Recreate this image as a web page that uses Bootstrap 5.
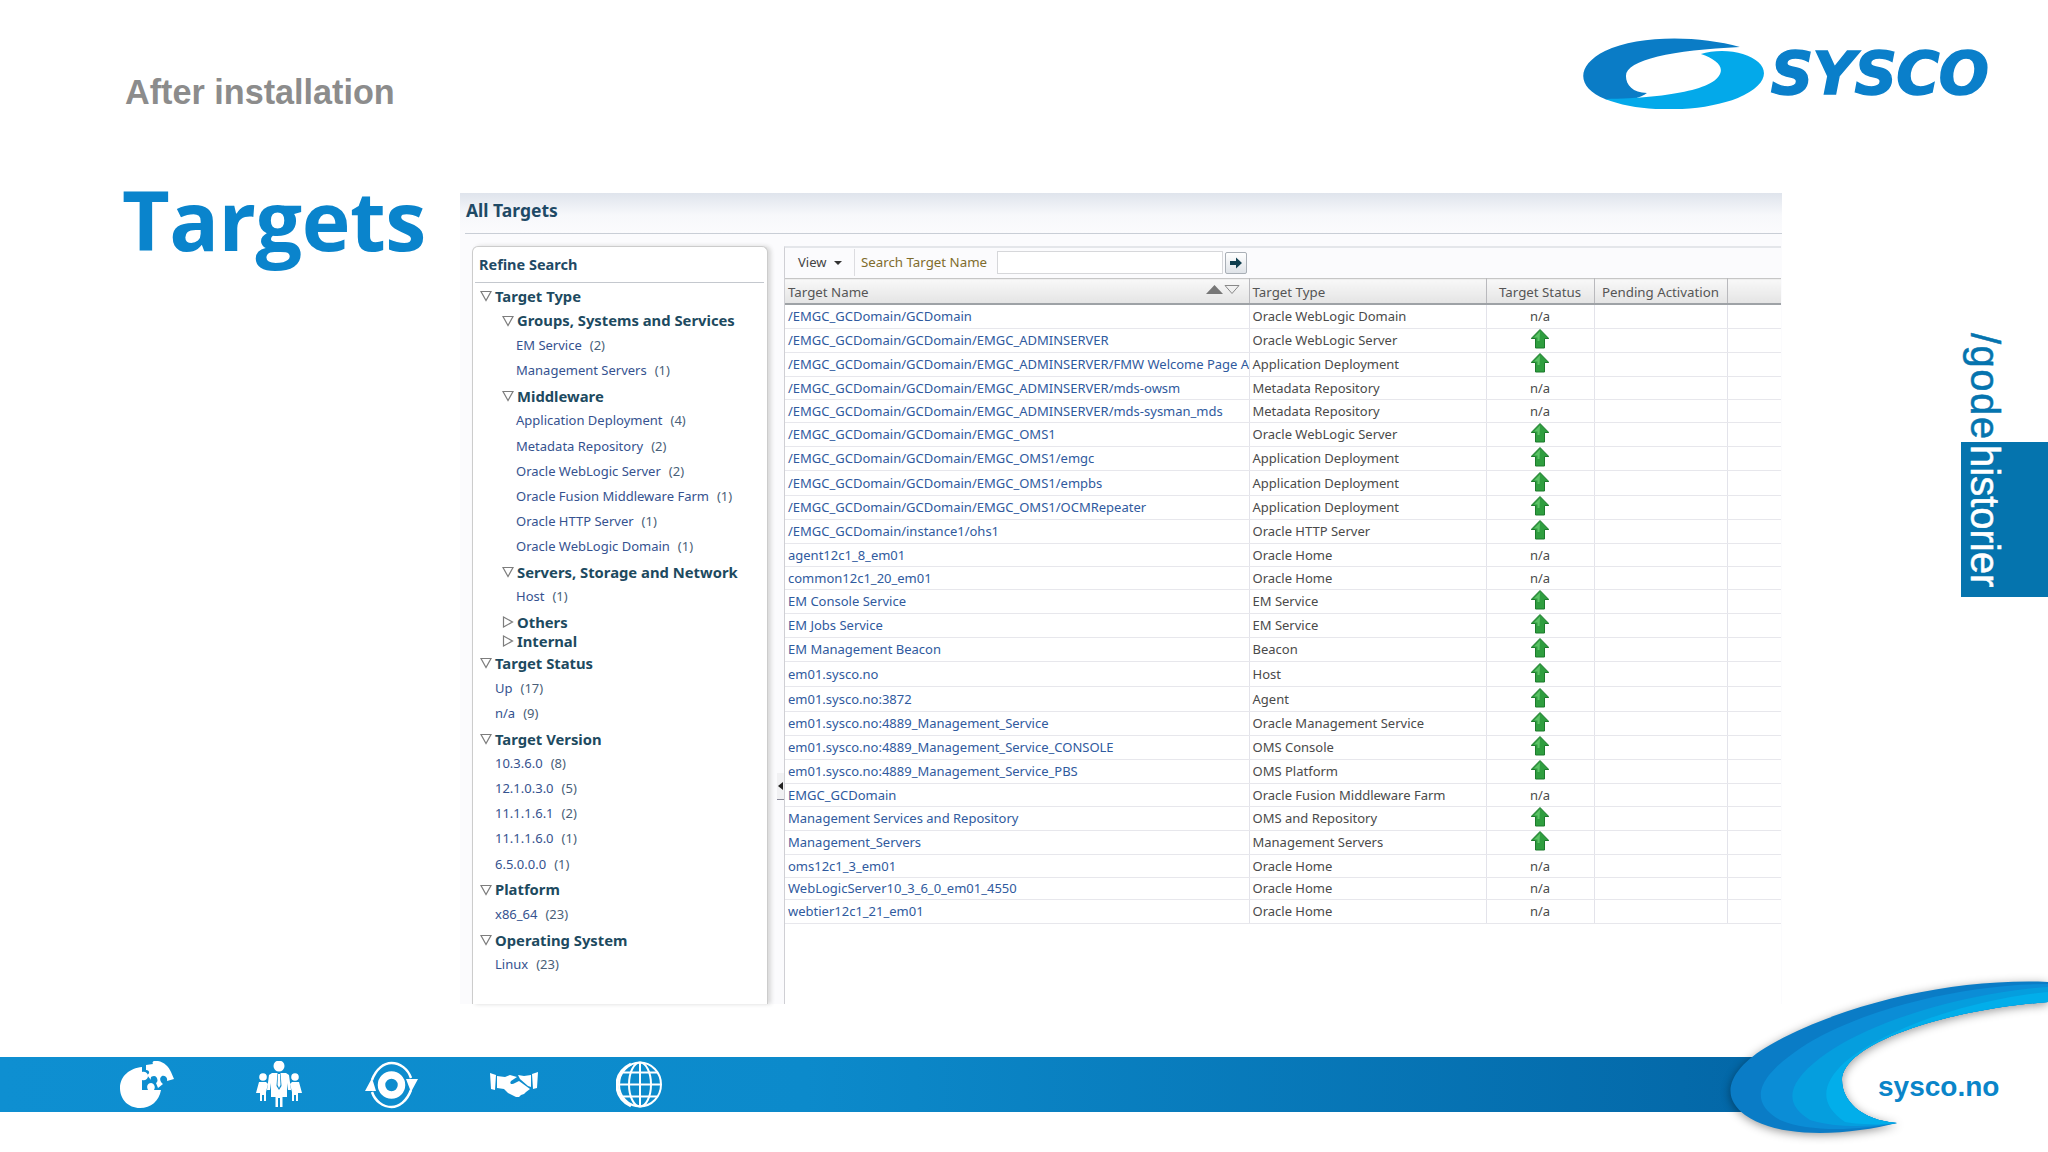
<!DOCTYPE html>
<html lang="en">
<head>
  <meta charset="UTF-8" />
  <title>After installation - Targets</title>
  <link href="https://cdn.jsdelivr.net/npm/bootstrap@5.3.0/dist/css/bootstrap.min.css" rel="stylesheet" />
  <style>
    body { margin: 0; background: #fff; font-family: "Noto Sans", sans-serif; }
    .slide { position: relative; width: 2048px; height: 1152px; overflow: hidden; background: #fff; }

    /* slide head */
    .slide-head { height: 193px; padding: 38px 60px 0 125px; }
    .slide-sub { font: bold 34.200px "Liberation Sans", sans-serif; color: #8c8c8c; margin: 35px 0 0; }
    .sysco-logo { display: flex; align-items: center; width: 405px; height: 71px; }
    .sysco-word { font: italic bold 59px/1 "DejaVu Sans", sans-serif; color: #0a7fca; -webkit-text-stroke: 1.500px #0a7fca; margin-left: 7px; letter-spacing: -.8px; }

    .slide-main { height: 811px; }
    .title-col { width: 460px; padding-left: 122px; }
    .slide-title { font: bold 82.500px/1 "Open Sans", sans-serif; color: #0a84cc; margin: -15px 0 0; letter-spacing: -.5px; }

    /* em console capture */
    .em-panel { width: 1322px; font-size: 13px; color: #4a4a4a; background: linear-gradient(#dfe4ec 0, #f7f8fb 22px, #fbfbfd 40px); }
    .em-top { height: 41px; margin-left: 5px; padding: 5px 0 0 1px; border-bottom: 1px solid #c9ced6; }
    .em-top h1 { font: bold 17.500px "Noto Sans", sans-serif; color: #1f4a66; margin: 0; }
    .em-body { padding: 12px 0 0 12px; height: 770px; }

    .refine { width: 296px; background: #fff; border: 1px solid #ccc; border-bottom: 0; border-radius: 6px 6px 0 0; box-shadow: 3px 0 4px #d8d8d8; margin-right: 16px; }
    .refine h2 { font: bold 14.500px "Noto Sans", sans-serif; color: #1f4a66; margin: 0 3px 0 2px; padding: 7px 4px 0 4px; height: 36px; border-bottom: 1px solid #c4c8ce; }
    .tree { padding-top: 1px; }
    .tree-row { display: flex; align-items: center; height: 25.150px; white-space: nowrap; }
    .tree-row.first { height: 24px; }
    .tree-row.shut-a { height: 20px; margin-top: 2px; }
    .tree-row.shut-b { height: 19px; }
    .tree-row svg { flex: none; margin-right: 3px; }
    .lvl-1 { padding-left: 7px; }
    .lvl-2 { padding-left: 29px; }
    .leaf-1 { padding-left: 22px; }
    .leaf-2 { padding-left: 43px; }
    .tree-head { font-weight: 700; color: #1d4a60; font-size: 14.800px; }
    .tree-row a { color: #35528f; text-decoration: none; margin-right: 8px; }
    .tree-row span.cnt { color: #4a5f78; }

    .results { width: 997px; position: relative; background: #fff; border-top: 2px solid #e4e6ea; border-left: 1px solid #cfcfd4; }
    .em-tools { height: 30px; background: #fbfbfd; padding-bottom: 1px; }
    .tool-view { width: 70px; height: 27px; padding-left: 13px; border-right: 1px solid #dcdce0; color: #444; }
    .tool-view i { display: inline-block; margin-left: 8px; border: 4px solid transparent; border-top-color: #333; border-bottom: 0; vertical-align: middle; }
    .tool-label { color: #7f6c2c; margin: 0 10px 0 6px; font-size: 13.300px; }
    .tool-input { width: 226px; height: 23px; border: 1px solid #d6d7da; background: #fff; }
    .tool-go { width: 22px; height: 22px; margin-left: 2px; padding: 0; border: 1px solid #a9afb6; border-radius: 2px; background: linear-gradient(#fff, #dfe3e8); line-height: 0; }

    .tgt-table { table-layout: fixed; width: 996px; margin: 0; border-collapse: collapse; background: #fff; }
    .tgt-table th, .tgt-table td { padding: 0 3px; font-size: 13px; line-height: 1; white-space: nowrap; overflow: hidden; vertical-align: middle; color: #4a4a4a; background: #fff; border-bottom: 1px solid #e7e7ec; border-right: 1px solid #e3e3ea; box-shadow: none; }
    .tgt-table th { height: 25px; padding-top: 3px; font-size: 13.300px; font-weight: 400; color: #555; background: linear-gradient(#f8f8f8, #e4e4e4); border-top: 1px solid #c6c6c6; border-bottom: 2px solid #9ea2a6; border-right: 1px solid #b9b9bd; }
    .tgt-table tr > :last-child { border-right: 0; }
    .tgt-table td a { color: #2f5a9e; text-decoration: none; }
    .rh-22 td { height: 22px; }
    .rh-23 td { height: 23px; }
    .rh-24 td { height: 24px; }
    .rh-25 td { height: 25px; }
    .up-icon { display: block; margin: -3px auto 0; }
    .sort-icons { float: right; margin: -2px 6px 0 0; }
    .split-handle { position: absolute; left: -8px; top: 525px; width: 7px; height: 27px; background: #f1f1f3; border-bottom: 1px solid #889; }
    .split-handle i { position: absolute; left: 1px; top: 9px; border: 4px solid transparent; border-left: 0; border-right: 5px solid #222; }

    /* foot band */
    .foot-band { width: 1790px; height: 55px; margin-top: 53px; padding-left: 120px; display: grid; grid-template-columns: 135px 110px 125px 126px 60px; align-items: center; background: linear-gradient(90deg, #0e8fd1, #0c8acb 45%, #0366a6); }

    /* overlays */
    .swoosh { position: absolute; left: 1717px; top: 970px; filter: drop-shadow(0 2px 5px rgba(0,0,0,.4)); }
    .sysco-url { position: absolute; left: 1878px; top: 1070px; font: bold 28px/34px "Liberation Sans", sans-serif; color: #0a85c9; }
    .story-tab { position: absolute; left: 1961px; top: 442px; width: 87px; height: 155px; background: #0574ae; }
    .story-text { position: absolute; left: 1962px; top: 333px; writing-mode: vertical-rl; font: 40px/46px "Liberation Sans", sans-serif; color: #0574ae; -webkit-text-stroke: .5px; white-space: nowrap; }
    .story-text span { letter-spacing: 1.500px; }
    .story-text b { font-weight: 400; color: #fff; margin-top: 4px; display: inline-block; }
  </style>
</head>
<body>
  <svg width="0" height="0" class="position-absolute">
    <symbol id="tri-open" viewBox="0 0 12 12"><path d="M1 1.500h10L6 10.500z" fill="#fff" stroke="#7d7d7d" stroke-width="1.200"/></symbol>
    <symbol id="tri-shut" viewBox="0 0 12 12"><path d="M1.500 1l9 5-9 5z" fill="#fff" stroke="#7d7d7d" stroke-width="1.200"/></symbol>
    <symbol id="up-arrow" viewBox="0 0 18 20"><path d="M9 .5L17.800 9.500H13.500V19H4.500V9.500H.2z" fill="#2f9e3f" stroke="#1d7a2c" stroke-width="1"/><path d="M9 2.500L3 8.500h3.500V12h2z" fill="#5cc266"/></symbol>
  </svg>

  <div class="slide">
    <!-- Head -->
    <div class="slide-head d-flex justify-content-between align-items-start">
      <p class="slide-sub">After installation</p>
      <div class="sysco-logo">
        <svg width="181" height="71" viewBox="0 0 181 71">
          <path d="M157 9C115-3 55-3 22 13-8 28-6 50 22 61 35 65 55 62 64 55 50 55 43 47 43 38 43 22 90 12 157 9z" fill="#0a7cc6"/>
          <path d="M22 61C60 76 120 74 155 60 190 45 188 25 160 16 148 12 130 12 118 16 130 20 138 26 138 32 138 50 90 60 22 61z" fill="#03a9ea"/>
        </svg>
        <span class="sysco-word">SYSCO</span>
      </div>
    </div>

    <!-- Title and capture -->
    <div class="slide-main d-flex">
      <div class="title-col"><h2 class="slide-title">Targets</h2></div>
      <div class="em-panel">
        <div class="em-top"><h1>All Targets</h1></div>
        <div class="em-body d-flex">
          <div class="refine">
            <h2>Refine Search</h2>
            <div class="tree">
              <div class="tree-row first lvl-1 tree-head"><svg width="12" height="12"><use href="#tri-open"/></svg>Target Type</div>
              <div class="tree-row lvl-2 tree-head"><svg width="12" height="12"><use href="#tri-open"/></svg>Groups, Systems and Services</div>
              <div class="tree-row leaf-2"><a href="#">EM Service</a><span class="cnt">(2)</span></div>
              <div class="tree-row leaf-2"><a href="#">Management Servers</a><span class="cnt">(1)</span></div>
              <div class="tree-row lvl-2 tree-head"><svg width="12" height="12"><use href="#tri-open"/></svg>Middleware</div>
              <div class="tree-row leaf-2"><a href="#">Application Deployment</a><span class="cnt">(4)</span></div>
              <div class="tree-row leaf-2"><a href="#">Metadata Repository</a><span class="cnt">(2)</span></div>
              <div class="tree-row leaf-2"><a href="#">Oracle WebLogic Server</a><span class="cnt">(2)</span></div>
              <div class="tree-row leaf-2"><a href="#">Oracle Fusion Middleware Farm</a><span class="cnt">(1)</span></div>
              <div class="tree-row leaf-2"><a href="#">Oracle HTTP Server</a><span class="cnt">(1)</span></div>
              <div class="tree-row leaf-2"><a href="#">Oracle WebLogic Domain</a><span class="cnt">(1)</span></div>
              <div class="tree-row lvl-2 tree-head"><svg width="12" height="12"><use href="#tri-open"/></svg>Servers, Storage and Network</div>
              <div class="tree-row leaf-2"><a href="#">Host</a><span class="cnt">(1)</span></div>
              <div class="tree-row shut-a lvl-2 tree-head"><svg width="12" height="12"><use href="#tri-shut"/></svg>Others</div>
              <div class="tree-row shut-b lvl-2 tree-head"><svg width="12" height="12"><use href="#tri-shut"/></svg>Internal</div>
              <div class="tree-row lvl-1 tree-head"><svg width="12" height="12"><use href="#tri-open"/></svg>Target Status</div>
              <div class="tree-row leaf-1"><a href="#">Up</a><span class="cnt">(17)</span></div>
              <div class="tree-row leaf-1"><a href="#">n/a</a><span class="cnt">(9)</span></div>
              <div class="tree-row lvl-1 tree-head"><svg width="12" height="12"><use href="#tri-open"/></svg>Target Version</div>
              <div class="tree-row leaf-1"><a href="#">10.3.6.0</a><span class="cnt">(8)</span></div>
              <div class="tree-row leaf-1"><a href="#">12.1.0.3.0</a><span class="cnt">(5)</span></div>
              <div class="tree-row leaf-1"><a href="#">11.1.1.6.1</a><span class="cnt">(2)</span></div>
              <div class="tree-row leaf-1"><a href="#">11.1.1.6.0</a><span class="cnt">(1)</span></div>
              <div class="tree-row leaf-1"><a href="#">6.5.0.0.0</a><span class="cnt">(1)</span></div>
              <div class="tree-row lvl-1 tree-head"><svg width="12" height="12"><use href="#tri-open"/></svg>Platform</div>
              <div class="tree-row leaf-1"><a href="#">x86_64</a><span class="cnt">(23)</span></div>
              <div class="tree-row lvl-1 tree-head"><svg width="12" height="12"><use href="#tri-open"/></svg>Operating System</div>
              <div class="tree-row leaf-1"><a href="#">Linux</a><span class="cnt">(23)</span></div>
            </div>
          </div>

          <div class="results">
            <div class="split-handle"><i></i></div>
            <div class="em-tools d-flex align-items-center">
              <div class="tool-view d-flex align-items-center">View<i></i></div>
              <span class="tool-label">Search Target Name</span>
              <div class="tool-input"></div>
              <button class="tool-go" type="button"><svg width="14" height="12" viewBox="0 0 14 12"><path d="M1 4h6V.5L13 6 7 11.500V8H1z" fill="#103f4f"/></svg></button>
            </div>
            <table class="table tgt-table">
              <colgroup><col style="width:464px"><col style="width:237px"><col style="width:108px"><col style="width:133px"><col style="width:54px"></colgroup>
              <thead>
                <tr>
                  <th>Target Name<svg class="sort-icons" width="34" height="11" viewBox="0 0 34 11"><path d="M0 10L8.500 1 17 10z" fill="#777"/><path d="M19 1.500h14L26 9.500z" fill="none" stroke="#888"/></svg></th>
                  <th>Target Type</th><th class="text-center">Target Status</th><th class="text-center">Pending Activation</th><th></th>
                </tr>
              </thead>
              <tbody>
                <tr class="rh-25"><td><a href="#">/EMGC_GCDomain/GCDomain</a></td><td>Oracle WebLogic Domain</td><td class="text-center">n/a</td><td></td><td></td></tr>
                <tr class="rh-24"><td><a href="#">/EMGC_GCDomain/GCDomain/EMGC_ADMINSERVER</a></td><td>Oracle WebLogic Server</td><td><svg class="up-icon" width="18" height="20"><use href="#up-arrow"/></svg></td><td></td><td></td></tr>
                <tr class="rh-24"><td><a href="#">/EMGC_GCDomain/GCDomain/EMGC_ADMINSERVER/FMW Welcome Page Ap</a></td><td>Application Deployment</td><td><svg class="up-icon" width="18" height="20"><use href="#up-arrow"/></svg></td><td></td><td></td></tr>
                <tr class="rh-23"><td><a href="#">/EMGC_GCDomain/GCDomain/EMGC_ADMINSERVER/mds-owsm</a></td><td>Metadata Repository</td><td class="text-center">n/a</td><td></td><td></td></tr>
                <tr class="rh-23"><td><a href="#">/EMGC_GCDomain/GCDomain/EMGC_ADMINSERVER/mds-sysman_mds</a></td><td>Metadata Repository</td><td class="text-center">n/a</td><td></td><td></td></tr>
                <tr class="rh-24"><td><a href="#">/EMGC_GCDomain/GCDomain/EMGC_OMS1</a></td><td>Oracle WebLogic Server</td><td><svg class="up-icon" width="18" height="20"><use href="#up-arrow"/></svg></td><td></td><td></td></tr>
                <tr class="rh-24"><td><a href="#">/EMGC_GCDomain/GCDomain/EMGC_OMS1/emgc</a></td><td>Application Deployment</td><td><svg class="up-icon" width="18" height="20"><use href="#up-arrow"/></svg></td><td></td><td></td></tr>
                <tr class="rh-25"><td><a href="#">/EMGC_GCDomain/GCDomain/EMGC_OMS1/empbs</a></td><td>Application Deployment</td><td><svg class="up-icon" width="18" height="20"><use href="#up-arrow"/></svg></td><td></td><td></td></tr>
                <tr class="rh-24"><td><a href="#">/EMGC_GCDomain/GCDomain/EMGC_OMS1/OCMRepeater</a></td><td>Application Deployment</td><td><svg class="up-icon" width="18" height="20"><use href="#up-arrow"/></svg></td><td></td><td></td></tr>
                <tr class="rh-24"><td><a href="#">/EMGC_GCDomain/instance1/ohs1</a></td><td>Oracle HTTP Server</td><td><svg class="up-icon" width="18" height="20"><use href="#up-arrow"/></svg></td><td></td><td></td></tr>
                <tr class="rh-23"><td><a href="#">agent12c1_8_em01</a></td><td>Oracle Home</td><td class="text-center">n/a</td><td></td><td></td></tr>
                <tr class="rh-23"><td><a href="#">common12c1_20_em01</a></td><td>Oracle Home</td><td class="text-center">n/a</td><td></td><td></td></tr>
                <tr class="rh-24"><td><a href="#">EM Console Service</a></td><td>EM Service</td><td><svg class="up-icon" width="18" height="20"><use href="#up-arrow"/></svg></td><td></td><td></td></tr>
                <tr class="rh-24"><td><a href="#">EM Jobs Service</a></td><td>EM Service</td><td><svg class="up-icon" width="18" height="20"><use href="#up-arrow"/></svg></td><td></td><td></td></tr>
                <tr class="rh-24"><td><a href="#">EM Management Beacon</a></td><td>Beacon</td><td><svg class="up-icon" width="18" height="20"><use href="#up-arrow"/></svg></td><td></td><td></td></tr>
                <tr class="rh-25"><td><a href="#">em01.sysco.no</a></td><td>Host</td><td><svg class="up-icon" width="18" height="20"><use href="#up-arrow"/></svg></td><td></td><td></td></tr>
                <tr class="rh-25"><td><a href="#">em01.sysco.no:3872</a></td><td>Agent</td><td><svg class="up-icon" width="18" height="20"><use href="#up-arrow"/></svg></td><td></td><td></td></tr>
                <tr class="rh-24"><td><a href="#">em01.sysco.no:4889_Management_Service</a></td><td>Oracle Management Service</td><td><svg class="up-icon" width="18" height="20"><use href="#up-arrow"/></svg></td><td></td><td></td></tr>
                <tr class="rh-24"><td><a href="#">em01.sysco.no:4889_Management_Service_CONSOLE</a></td><td>OMS Console</td><td><svg class="up-icon" width="18" height="20"><use href="#up-arrow"/></svg></td><td></td><td></td></tr>
                <tr class="rh-24"><td><a href="#">em01.sysco.no:4889_Management_Service_PBS</a></td><td>OMS Platform</td><td><svg class="up-icon" width="18" height="20"><use href="#up-arrow"/></svg></td><td></td><td></td></tr>
                <tr class="rh-23"><td><a href="#">EMGC_GCDomain</a></td><td>Oracle Fusion Middleware Farm</td><td class="text-center">n/a</td><td></td><td></td></tr>
                <tr class="rh-24"><td><a href="#">Management Services and Repository</a></td><td>OMS and Repository</td><td><svg class="up-icon" width="18" height="20"><use href="#up-arrow"/></svg></td><td></td><td></td></tr>
                <tr class="rh-24"><td><a href="#">Management_Servers</a></td><td>Management Servers</td><td><svg class="up-icon" width="18" height="20"><use href="#up-arrow"/></svg></td><td></td><td></td></tr>
                <tr class="rh-23"><td><a href="#">oms12c1_3_em01</a></td><td>Oracle Home</td><td class="text-center">n/a</td><td></td><td></td></tr>
                <tr class="rh-22"><td><a href="#">WebLogicServer10_3_6_0_em01_4550</a></td><td>Oracle Home</td><td class="text-center">n/a</td><td></td><td></td></tr>
                <tr class="rh-24"><td><a href="#">webtier12c1_21_em01</a></td><td>Oracle Home</td><td class="text-center">n/a</td><td></td><td></td></tr>
              </tbody>
            </table>
          </div>
        </div>
      </div>
    </div>

    <!-- Foot band -->
    <div class="foot-band">
      <svg width="54" height="47" viewBox="0 0 54 47" fill="#fff">
        <path d="M22 6C10 7 0 15 0 27 0 38 8 47 20 47 31 47 39 40 41 29H34C36 26 34 22 31 22 28 22 26 25 28 29H22V19C25 20 28 18 28 15 28 12 25 10 22 11z"/>
        <path d="M26 4L33 3C31 0 36-1 38 0 44 1 49 6 51 11L54 18 47 20C48 16 44 14 42 15 39 17 40 21 43 23L38 27 36 22C39 20 37 15 34 15 32 15 30 16 31 19L27 14C30 13 30 9 26 9z"/>
      </svg>
      <svg width="48" height="47" viewBox="0 0 48 47" fill="#fff">
        <circle cx="24" cy="5" r="5.500"/>
        <path d="M17 12H31L34 14 36 29H33L32 22V36H27.500V46H25V37H23V46H20.500V36H16V22L15 29H12L14 14z"/>
        <path d="M22.500 12H25.500L26.500 25 24 29 21.500 25z" fill="#0c8acb"/>
        <path d="M23 13H25L25.500 24 24 27 22.500 24z"/>
        <circle cx="8" cy="16" r="3.800"/>
        <path d="M4 21H11L13 23 11 31V40H9V34H7V40H5V32L1 32z"/>
        <circle cx="40" cy="16" r="3.800"/>
        <path d="M37 21H44L47 32 43 32V40H41V34H39V40H37V31L35 23z"/>
      </svg>
      <svg width="53" height="48" viewBox="0 0 53 48" fill="none" stroke="#fff">
        <circle cx="26.500" cy="24" r="10" stroke-width="7.500"/>
        <path d="M7 19C11 8 19 2 26.500 2 35 2 43 8 46 17" stroke-width="2.500"/>
        <path d="M46 29C42 40 34 46 26.500 46 18 46 10 40 7 31" stroke-width="2.500"/>
        <path d="M0 30L7 17 11 30z M41 18H53L46 31z" fill="#fff" stroke="none"/>
      </svg>
      <svg width="48" height="27" viewBox="0 0 48 27" fill="#fff">
        <path d="M0 2L6 4 5 19 1 18z M48 1L42 3 43 18 47 17z"/>
        <path d="M7 5L15 6 20 4 27 6 21 10C19 13 22 14 25 12L29 10 40 18 36 21 34 23 31 24 29 26 26 26 22 24 18 22 14 18 7 17z"/>
        <path d="M28 4L34 5 41 4 41 16 38 15 30 8z"/>
      </svg>
      <svg width="46" height="47" viewBox="0 0 46 47" fill="none" stroke="#fff" stroke-width="2">
        <ellipse cx="24" cy="23.500" rx="21" ry="22"/>
        <ellipse cx="24" cy="23.500" rx="11" ry="22"/>
        <path d="M24 1.500V45.500M3 23.500H45M7 11.500H41M7 35.500H41"/>
        <path d="M15 3C5 8 1 16 1 24 1 32 5 40 15 45" stroke-width="3"/>
      </svg>
    </div>

    <!-- Overlays -->
    <svg class="swoosh" width="331" height="175" viewBox="0 0 331 175">
      <path d="M331 12C233 8 123 35 53 75 13 98 1 125 28 145 63 170 133 165 180 153 143 150 125 130 125 110 125 75 223 40 331 32z" fill="#0a7cc6"/>
      <path d="M331 14C243 14 133 42 78 82 41 108 31 132 63 150 93 163 143 160 180 153 143 150 125 130 125 110 125 75 223 40 331 32z" fill="#0b8dd6"/>
      <path d="M331 17C253 22 153 50 103 88 68 115 68 135 93 150 118 158 153 157 180 153 143 150 125 130 125 110 125 75 223 40 331 32z" fill="#059ede"/>
      <path d="M331 22C263 28 173 55 128 92 103 115 103 135 128 152 143 155 168 155 180 153 143 150 125 130 125 110 125 75 223 40 331 32z" fill="#02aeea"/>
    </svg>
    <div class="sysco-url">sysco.no</div>
    <div class="story-tab"></div>
    <div class="story-text"><span>/gode</span><b>historier</b></div>
  </div>

  <script src="https://cdn.jsdelivr.net/npm/bootstrap@5.3.0/dist/js/bootstrap.bundle.min.js"></script>
</body>
</html>
